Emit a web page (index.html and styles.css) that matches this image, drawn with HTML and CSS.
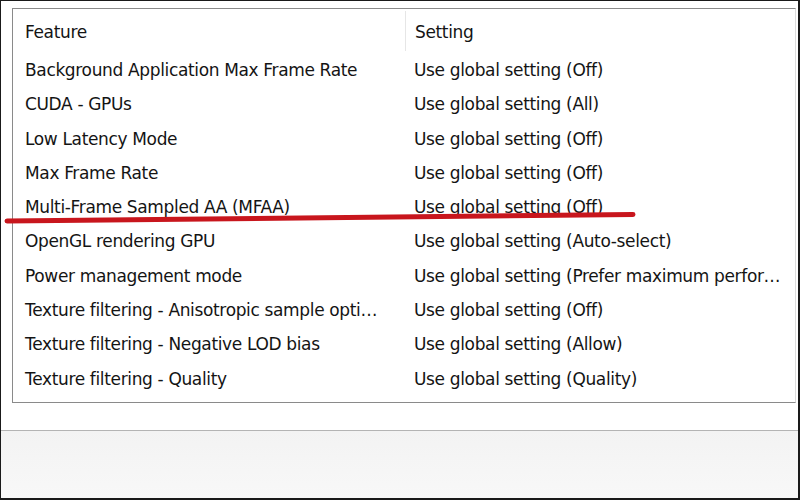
FILE: index.html
```html
<!DOCTYPE html>
<html>
<head>
<meta charset="utf-8">
<link rel="stylesheet" href="styles.css">
</head>
<body>
<div class="frame">
  <div class="panel">
    <div class="list">
      <div class="head">
        <div class="hcell c1">Feature</div>
        <div class="hcell c2">Setting</div>
      </div>
      <div class="rows">
        <div class="row"><span class="c1">Background Application Max Frame Rate</span><span class="c2">Use global setting (Off)</span></div>
        <div class="row"><span class="c1">CUDA - GPUs</span><span class="c2">Use global setting (All)</span></div>
        <div class="row"><span class="c1">Low Latency Mode</span><span class="c2">Use global setting (Off)</span></div>
        <div class="row"><span class="c1">Max Frame Rate</span><span class="c2">Use global setting (Off)</span></div>
        <div class="row"><span class="c1">Multi-Frame Sampled AA (MFAA)</span><span class="c2">Use global setting (Off)</span></div>
        <div class="row"><span class="c1">OpenGL rendering GPU</span><span class="c2">Use global setting (Auto-select)</span></div>
        <div class="row"><span class="c1">Power management mode</span><span class="c2">Use global setting (Prefer maximum perfor…</span></div>
        <div class="row"><span class="c1">Texture filtering - Anisotropic sample opti…</span><span class="c2">Use global setting (Off)</span></div>
        <div class="row"><span class="c1">Texture filtering - Negative LOD bias</span><span class="c2">Use global setting (Allow)</span></div>
        <div class="row"><span class="c1">Texture filtering - Quality</span><span class="c2">Use global setting (Quality)</span></div>
      </div>
    </div>
  </div>
  <div class="footer"></div>
  <svg class="mark" width="800" height="500" viewBox="0 0 800 500">
    <path d="M7 221 L633 214.5" stroke="#c8161d" stroke-width="5" stroke-linecap="round" fill="none"/>
  </svg>
</div>
</body>
</html>
```

FILE: styles.css
```css
html, body {
  margin: 0;
  padding: 0;
  background: #ffffff;
}
.frame {
  position: relative;
  width: 800px;
  height: 500px;
  box-sizing: border-box;
  border: 1px solid #1a1a1a;
  border-right-width: 2px;
  border-bottom-width: 2px;
  display: flex;
  flex-direction: column;
  overflow: hidden;
  font-family: "DejaVu Sans", sans-serif;
  letter-spacing: -0.35px;
  color: #141414;
}
.panel {
  height: 430px;
  box-sizing: border-box;
  padding: 7px 2px 0 11px;
  border-bottom: 1px solid #b4b4b4;
  background: #ffffff;
}
.list {
  height: 395px;
  box-sizing: border-box;
  border: 1px solid #8a8a8a;
  border-right-color: #dcdcdc;
  padding-top: 2px;
}
.head {
  display: flex;
  height: 40px;
  align-items: center;
}
.hcell {
  font-size: 17px;
  height: 40px;
  line-height: 42px;
}
.head .c2 {
  border-left: 1px solid #e6e6e6;
  padding-left: 9px;
}
.c1 {
  width: 391px;
  padding-left: 12px;
  box-sizing: border-box;
  white-space: nowrap;
  overflow: hidden;
}
.head .c1 { width: 392px; }
.c2 {
  padding-left: 10px;
  white-space: nowrap;
}
.rows {
  padding-top: 2px;
}
.row {
  display: flex;
  height: 34.3px;
  line-height: 34px;
  font-size: 17px;
}
.footer {
  flex: 1;
  background: linear-gradient(#f3f3f3, #f8f8f8);
}
.mark {
  position: absolute;
  left: -1px;
  top: -1px;
  pointer-events: none;
}
```
